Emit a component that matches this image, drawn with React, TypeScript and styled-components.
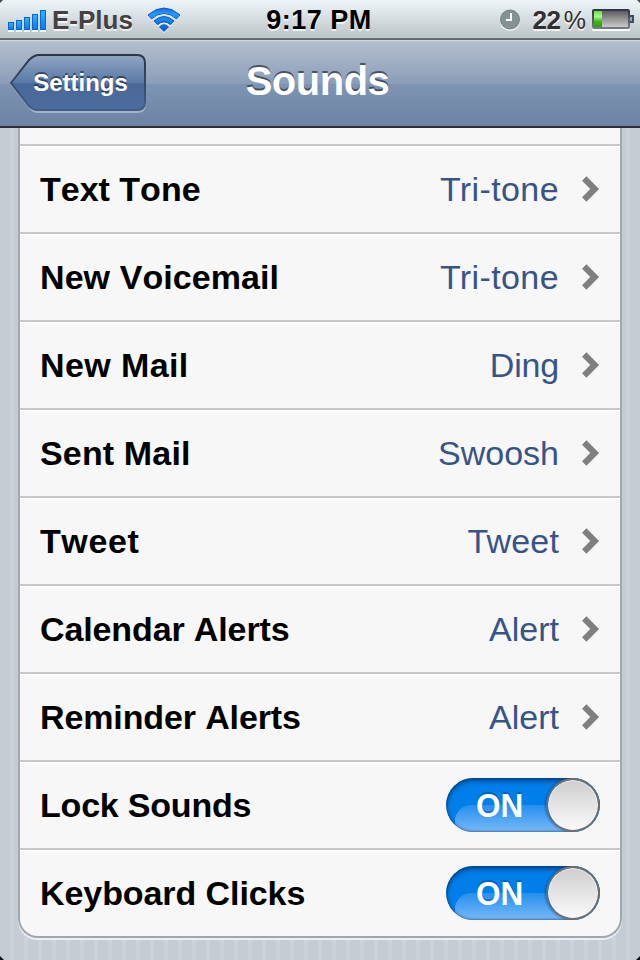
import React from "react";
import styled, { createGlobalStyle } from "styled-components";

const Global = createGlobalStyle`
  * { box-sizing: border-box; }
  body { margin: 0; background: #c5ccd4; font-family: "Liberation Sans", Arial, sans-serif; }
`;

const Screen = styled.div`
  position: relative;
  display: flex;
  flex-direction: column;
  width: 640px;
  height: 960px;
  overflow: hidden;
  background: repeating-linear-gradient(90deg, #c5ccd4 0 10px, #cbd2d9 10px 14px);
`;

const StatusBar = styled.header`
  display: grid;
  grid-template-columns: 1fr auto 1fr;
  align-items: center;
  height: 40px;
  flex: none;
  padding: 0 6px 2px 8px;
  background: linear-gradient(#edf5f8 0, #dfe6e9 12px, #bdc4c6 38px, #6f7b7d 38px, #566265 40px);
`;

const StatusGroup = styled.div<{ $end?: boolean }>`
  display: flex;
  align-items: center;
  height: 38px;
  justify-content: ${(p) => (p.$end ? "flex-end" : "flex-start")};
`;

const StatusText = styled.span<{ $color: string; $size: number; $spacing: number; $weight?: number }>`
  font-size: ${(p) => p.$size}px;
  font-weight: ${(p) => p.$weight ?? 700};
  letter-spacing: ${(p) => p.$spacing}px;
  line-height: 38px;
  padding-top: 1px;
  color: ${(p) => p.$color};
  text-shadow: 0 2px 0 rgba(255, 255, 255, 0.75);
  white-space: nowrap;
`;

const Time = styled(StatusText)`margin-right: 4px;`;
const Carrier = styled(StatusText)`margin: 0 15px 0 6px;`;
const Percent = styled(StatusText)`margin: 0 6px 0 3px;`;
const BatteryLevel = styled(StatusText)`margin-left: 12px;`;
const Icon = styled.svg`display: block; flex: none; overflow: visible;`;

const NavBar = styled.nav`
  display: grid;
  grid-template-columns: 146px 1fr 151px;
  height: 88px;
  flex: none;
  border-bottom: 2px solid #2c3036;
  background: linear-gradient(#d6dce2 0, #b4bfcc 2px, #8a9db8 44px, #7e94b2 44px, #6d83a3 86px);
`;

const BackButton = styled.button`
  position: relative;
  width: 138px;
  height: 60px;
  margin: 13px 0 0 9px;
  padding: 0;
  border: 0;
  background: none;
`;

const BackShape = styled(Icon)`position: absolute; inset: 0;`;

const BackLabel = styled.span`
  position: relative;
  display: block;
  padding: 0 0 2px 5px;
  color: #fff;
  font: 700 24px/60px "Liberation Sans", Arial, sans-serif;
  letter-spacing: 0;
  text-shadow: 0 -2px 0 rgba(23, 39, 65, 0.65);
`;

const Title = styled.h1`
  margin: 0;
  text-align: center;
  color: #fff;
  font-size: 40px;
  line-height: 83px;
  letter-spacing: -0.5px;
  text-shadow: 0 -2px 0 rgba(45, 56, 72, 0.75);
`;

const Card = styled.main`
  width: 604px;
  height: 810px;
  flex: none;
  margin-left: 18px;
  border: 2px solid #a0a7b1;
  border-top: 0;
  border-radius: 0 0 20px 20px;
  background: #f7f7f7;
  box-shadow: 0 2px 0 #edf0f2;
`;

const PreviousRow = styled.div`height: 16px;`;

const Row = styled.div`
  display: flex;
  align-items: center;
  height: 88px;
  padding: 0 20px;
  border-top: 2px solid #c8c8c8;
  box-shadow: inset 0 2px 0 #fff;
`;

const Label = styled.span<{ $spacing: number }>`
  flex: 1;
  color: #000;
  font-size: 34px;
  font-weight: 700;
  font-kerning: none;
  line-height: 86px;
  letter-spacing: ${(p) => p.$spacing}px;
  white-space: nowrap;
`;

const Value = styled.span<{ $spacing: number }>`
  margin-right: 23px;
  color: #385487;
  font-size: 34px;
  line-height: 86px;
  letter-spacing: ${(p) => p.$spacing}px;
  white-space: nowrap;
`;

const Track = styled.div`
  position: relative;
  width: 154px;
  height: 54px;
  overflow: hidden;
  border-radius: 27px;
  background: #007ee9;
`;

const Gloss = styled.div`
  position: absolute;
  left: 9px;
  right: 9px;
  top: 27px;
  height: 40px;
  border-radius: 16px 16px 0 0;
  background: linear-gradient(#258ff0, #78b9f6 27px);
`;

const TrackShade = styled.div`
  position: absolute;
  inset: 0;
  border-radius: 27px;
  box-shadow: inset 0 3px 5px rgba(0, 35, 85, 0.6), inset 0 0 2px 1px rgba(30, 65, 110, 0.5);
`;

const SwitchText = styled.span`
  position: absolute;
  left: 30px;
  top: 0;
  color: #fff;
  font-size: 33px;
  font-weight: 700;
  line-height: 56px;
  transform: scaleX(0.955);
  transform-origin: left;
  text-shadow: 0 -2px 0 rgba(0, 70, 145, 0.5);
`;

const Knob = styled.div`
  position: absolute;
  right: 0;
  top: 0;
  width: 54px;
  height: 54px;
  border: 2px solid #707070;
  border-left-color: #4f7092;
  border-radius: 50%;
  background: linear-gradient(#cecece, #fafafa) padding-box;
  box-shadow: inset 0 0 0 1px rgba(255, 255, 255, 0.6), -1px 0 2px rgba(0, 35, 80, 0.4);
`;

const Corner = styled(Icon)<{ $x: number; $y: number }>`
  position: absolute;
  left: ${(p) => p.$x}px;
  top: ${(p) => p.$y}px;
`;

const choices = [
  { label: "Text Tone", spacing: 0, value: "Tri-tone", valueSpacing: 0.4 },
  { label: "New Voicemail", spacing: 0.08, value: "Tri-tone", valueSpacing: 0.4 },
  { label: "New Mail", spacing: 0.4, value: "Ding", valueSpacing: -0.2 },
  { label: "Sent Mail", spacing: 0.15, value: "Swoosh", valueSpacing: 0 },
  { label: "Tweet", spacing: 0.6, value: "Tweet", valueSpacing: 0.15 },
  { label: "Calendar Alerts", spacing: -0.12, value: "Alert", valueSpacing: 0 },
  { label: "Reminder Alerts", spacing: -0.12, value: "Alert", valueSpacing: 0 },
];
const switches = [
  { label: "Lock Sounds", spacing: -0.2 },
  { label: "Keyboard Clicks", spacing: -0.08 },
];

const Signal = () => (
  <Icon width="38" height="38" viewBox="0 0 38 38">
    <defs>
      <linearGradient id="signal" x2="0" y2="1"><stop stopColor="#35b0ff" /><stop offset="1" stopColor="#077af1" /></linearGradient>
    </defs>
    {[8, 10, 13, 16, 20].map((h, i) => (
      <g key={h}>
        <rect x={i * 8} y={29 - h} width="6" height={h + 2} fill="#f4f8fa" />
        <rect x={i * 8 + 0.5} y={29.5 - h} width="5" height={h - 1} fill="url(#signal)" stroke="#0868d0" />
      </g>
    ))}
  </Icon>
);

const WifiShapes = () => (
  <>
    <path d="M0 7 Q16-7 32 7L28.5 11Q16 0 3.5 11Z" />
    <path d="M6 13Q16 4 26 13L22.5 16.8Q16 11 9.5 16.8Z" />
    <path d="M11.5 19Q16 14.5 20.5 19L16 23.5Z" />
  </>
);

const Wifi = () => (
  <Icon width="32" height="24" viewBox="0 0 32 24">
    <defs><linearGradient id="wifi" gradientUnits="userSpaceOnUse" x1="0" y1="0" x2="0" y2="24"><stop stopColor="#1b6ddc" /><stop offset=".25" stopColor="#209cff" /><stop offset="1" stopColor="#0754d2" /></linearGradient></defs>
    <g fill="#f5f9fb" transform="translate(0 1.5)"><WifiShapes /></g>
    <g fill="url(#wifi)" stroke="#0a4fb5" strokeWidth=".9"><WifiShapes /></g>
  </Icon>
);

const Clock = () => (
  <Icon width="20" height="22" viewBox="0 0 20 22">
    <circle cx="10" cy="12" r="10" fill="#f1f5f6" />
    <circle cx="10" cy="10.5" r="9.5" fill="#869292" stroke="#727f80" />
    <path d="M11 4V11H6" fill="none" stroke="#fff" strokeWidth="2" />
  </Icon>
);

const Battery = () => (
  <Icon width="42" height="22" viewBox="0 0 42 22">
    <defs>
      <linearGradient id="empty" x2="0" y2="1"><stop stopColor="#555" /><stop offset=".4" stopColor="#898989" /><stop offset="1" stopColor="#d0d0d0" /></linearGradient>
      <linearGradient id="charge" x2="0" y2="1"><stop stopColor="#67df3d" /><stop offset=".35" stopColor="#a9f98a" /><stop offset=".65" stopColor="#42b51b" /><stop offset="1" stopColor="#2b9c0e" /></linearGradient>
      <linearGradient id="case" x2="0" y2="1"><stop stopColor="#30364b" /><stop offset="1" stopColor="#777886" /></linearGradient>
    </defs>
    <rect y="2" width="38" height="20" rx="1" fill="#f7fafa" />
    <path d="M37 7h4v6h-4" fill="#9ba6b1" stroke="#41495d" strokeWidth="2" />
    <rect x="1" y="1" width="36" height="18" rx="1" fill="url(#empty)" stroke="url(#case)" strokeWidth="2" />
    <rect x="2" y="2" width="8" height="16" fill="url(#charge)" />
  </Icon>
);

const Chevron = () => (
  <Icon width="18" height="26" viewBox="0 0 18 26">
    <path d="M2.2 2.5L12.7 13L2.2 23.5" fill="none" stroke="#7f7f7f" strokeWidth="6.2" />
  </Icon>
);

const Switch = () => (
  <Track role="switch" aria-checked="true">
    <Gloss />
    <TrackShade />
    <SwitchText>ON</SwitchText>
    <Knob />
  </Track>
);

export default function App() {
  return (
    <>
      <Global />
      <Screen>
        <StatusBar>
          <StatusGroup>
            <Signal />
            <Carrier $color="#424242" $size={26} $spacing={0}>E-Plus</Carrier>
            <Wifi />
          </StatusGroup>
          <Time $color="#000" $size={27} $spacing={0.5}>9:17 PM</Time>
          <StatusGroup $end>
            <Clock />
            <BatteryLevel $color="#303030" $size={26} $spacing={-0.3}>22</BatteryLevel>
            <Percent $color="#303030" $size={25} $spacing={0} $weight={400}>%</Percent>
            <Battery />
          </StatusGroup>
        </StatusBar>
        <NavBar>
          <BackButton>
            <BackShape width="138" height="60" viewBox="0 0 138 60">
              <defs>
                <linearGradient id="back" x2="0" y2="1"><stop stopColor="#91a6c3" /><stop offset=".51" stopColor="#5878a5" /><stop offset=".52" stopColor="#486998" /><stop offset="1" stopColor="#4b6c9d" /></linearGradient>
                <linearGradient id="backBorder" x2="0" y2="1"><stop stopColor="#2c3748" /><stop offset="1" stopColor="#405d88" /></linearGradient>
              </defs>
              <path d="M2 31L21 7Q25 3 29 3H128Q136 3 136 11V51Q136 59 128 59H29Q24 59 21 55Z" fill="none" stroke="#a5b4c8" strokeWidth="2" />
              <path d="M2 30L20 7Q25 2 30 2H128Q136 2 136 10V49Q136 57 128 57H29Q24 57 20 53Z" fill="url(#back)" stroke="url(#backBorder)" strokeWidth="2" />
            </BackShape>
            <BackLabel>Settings</BackLabel>
          </BackButton>
          <Title>Sounds</Title>
        </NavBar>
        <Card>
          <PreviousRow />
          {choices.map((c) => (
            <Row key={c.label}>
              <Label $spacing={c.spacing}>{c.label}</Label>
              <Value $spacing={c.valueSpacing}>{c.value}</Value>
              <Chevron />
            </Row>
          ))}
          {switches.map((s) => (
            <Row key={s.label}>
              <Label $spacing={s.spacing}>{s.label}</Label>
              <Switch />
            </Row>
          ))}
        </Card>
        <Corner $x={0} $y={0} width="4" height="4"><path d="M0 0H3L0 3Z" fill="#454b50" /></Corner>
        <Corner $x={636} $y={0} width="4" height="4"><path d="M1 0H4V3Z" fill="#454b50" /></Corner>
        <Corner $x={0} $y={956} width="4" height="4"><path d="M0 0L4 4H0Z" fill="#111" /></Corner>
        <Corner $x={636} $y={956} width="4" height="4"><path d="M4 0V4H0Z" fill="#111" /></Corner>
      </Screen>
    </>
  );
}
